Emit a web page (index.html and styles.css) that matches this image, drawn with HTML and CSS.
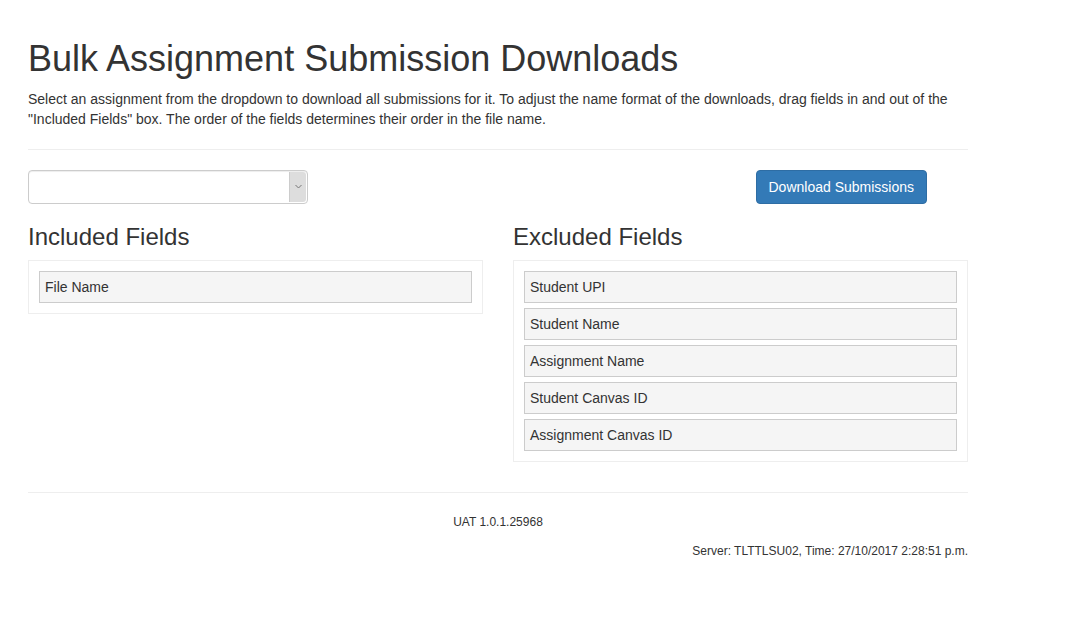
FILE: index.html
```html
<!DOCTYPE html>
<html lang="en">
<head>
<meta charset="utf-8">
<title>Bulk Assignment Submission Downloads</title>
<link rel="stylesheet" href="styles.css">
</head>
<body>
<div class="container">
  <h1 class="title">Bulk Assignment Submission Downloads</h1>
  <p class="lead-text">Select an assignment from the dropdown to download all submissions for it. To adjust the name format of the downloads, drag fields in and out of the "Included Fields" box. The order of the fields determines their order in the file name.</p>
  <hr class="rule rule-top">
  <div class="controls">
    <div class="select-cell">
      <div class="select" role="combobox" aria-label="Assignment">
        <span class="select-value"></span>
        <span class="select-arrow">
          <svg width="7" height="5" viewBox="0 0 7 5" aria-hidden="true"><path d="M0.5 1 L3.5 4 L6.5 1" fill="none" stroke="#777" stroke-width="1"/></svg>
        </span>
      </div>
    </div>
    <div class="button-cell">
      <button class="btn-primary" type="button">Download Submissions</button>
    </div>
  </div>
  <div class="fields">
    <section class="field-col">
      <h3 class="field-title">Included Fields</h3>
      <div class="field-box">
        <div class="field-item">File Name</div>
      </div>
    </section>
    <section class="field-col">
      <h3 class="field-title">Excluded Fields</h3>
      <div class="field-box">
        <div class="field-item">Student UPI</div>
        <div class="field-item">Student Name</div>
        <div class="field-item">Assignment Name</div>
        <div class="field-item">Student Canvas ID</div>
        <div class="field-item">Assignment Canvas ID</div>
      </div>
    </section>
  </div>
  <hr class="rule rule-bottom">
  <footer class="footer">
    <p class="version">UAT 1.0.1.25968</p>
    <p class="server">Server: TLTTLSU02, Time: 27/10/2017 2:28:51 p.m.</p>
  </footer>
</div>
</body>
</html>
```
FILE: styles.css
```css
html, body {
  margin: 0;
  padding: 0;
  background: #fff;
}

body {
  font-family: "Liberation Sans", Arial, sans-serif;
  font-size: 14px;
  line-height: 20px;
  color: #333;
}

.container {
  width: 940px;
  margin-left: 28px;
  padding-top: 39px;
}

.title {
  margin: 0 0 10px;
  font-size: 36px;
  font-weight: 400;
  line-height: 39.6px;
}

.lead-text {
  margin: 0;
}

.rule {
  border: 0;
  border-top: 1px solid #eee;
  margin: 0;
}

.rule-top {
  margin-top: 20px;
}

.controls {
  display: grid;
  grid-template-columns: 727.5px 1fr;
  margin-top: 20px;
}

.select {
  box-sizing: border-box;
  width: 280px;
  height: 34px;
  border: 1px solid #ccc;
  border-radius: 4px;
  display: flex;
  justify-content: flex-end;
  padding: 1px;
  box-shadow: inset 0 1px 1px rgba(0,0,0,0.075);
}

.select-value {
  flex: 1;
}

.select-arrow {
  width: 16px;
  background: #ddd;
  border-left: 1px solid #ccc;
  border-radius: 0 3px 3px 0;
  display: flex;
  align-items: center;
  justify-content: center;
}

.btn-primary {
  box-sizing: border-box;
  height: 34px;
  padding: 6px 12px;
  font-family: inherit;
  font-size: 14px;
  line-height: 20px;
  color: #fff;
  background: #337ab7;
  border: 1px solid #2e6da4;
  border-radius: 4px;
}

.fields {
  display: grid;
  grid-template-columns: 1fr 1fr;
  column-gap: 30px;
  align-items: start;
}

.field-title {
  margin: 20px 0 10px;
  font-size: 24px;
  font-weight: 400;
  line-height: 26.4px;
}

.field-box {
  border: 1px solid #eee;
  padding: 10px;
  display: flex;
  flex-direction: column;
  gap: 5px;
}

.field-item {
  border: 1px solid #ccc;
  background: #f5f5f5;
  padding: 5px;
  line-height: 20px;
}

.rule-bottom {
  margin-top: 30px;
}

.footer {
  font-size: 12px;
  line-height: 17px;
}

.version {
  margin: 21px 0 12px;
  text-align: center;
}

.server {
  margin: 0;
  text-align: right;
}
```
